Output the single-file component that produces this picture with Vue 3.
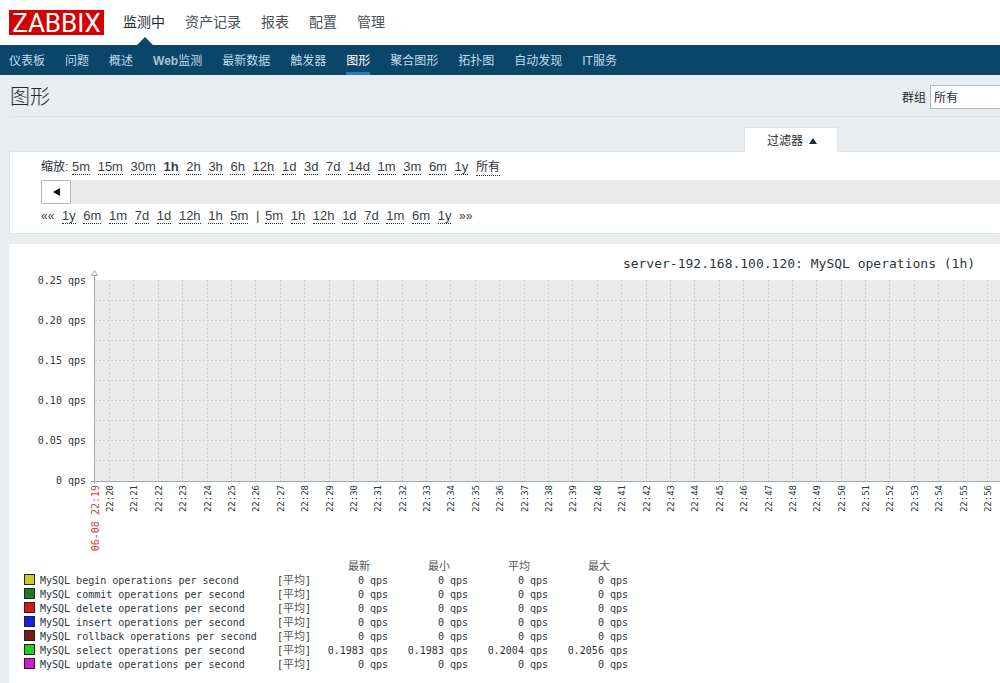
<script setup>
const mainMenu = ['监测中', '资产记录', '报表', '配置', '管理']
const subMenu = ['仪表板', '问题', '概述', 'Web监测', '最新数据', '触发器', '图形', '聚合图形', '拓扑图', '自动发现', 'IT服务']
const zooms = ['5m', '15m', '30m', '1h', '2h', '3h', '6h', '12h', '1d', '3d', '7d', '14d', '1m', '3m', '6m', '1y']
const back = ['1y', '6m', '1m', '7d', '1d', '12h', '1h', '5m']
const forward = ['5m', '1h', '12h', '1d', '7d', '1m', '6m', '1y']

const yLabels = ['0.25 qps', '0.20 qps', '0.15 qps', '0.10 qps', '0.05 qps', '0 qps']
const rows = [1, 2, 3, 4, 5, 6, 7, 8, 9].map((i) => 36 + i * 20)
const ticks = Array.from({ length: 37 }, (_, i) => ({
  x: Math.round(100 + (i * 878) / 36),
  label: '22:' + (20 + i)
}))

const columns = ['最新', '最小', '平均', '最大']
const zero = ['0 qps', '0 qps', '0 qps', '0 qps']
const items = [
  { name: 'begin', color: '#cccc22', values: zero },
  { name: 'commit', color: '#1f7a1f', values: zero },
  { name: 'delete', color: '#cc1c1c', values: zero },
  { name: 'insert', color: '#1c1cee', values: zero },
  { name: 'rollback', color: '#7a1a1a', values: zero },
  { name: 'select', color: '#22cc22', values: ['0.1983 qps', '0.1983 qps', '0.2004 qps', '0.2056 qps'] },
  { name: 'update', color: '#cc1ccc', values: zero }
]
</script>

<template>
  <div class="page">
    <header class="top">
      <a class="logo" href="#">ZABBIX</a>
      <nav class="main-nav">
        <a v-for="m in mainMenu" :key="m" href="#" :class="{ on: m === '监测中' }">{{ m }}</a>
      </nav>
    </header>
    <nav class="sub-nav">
      <a v-for="s in subMenu" :key="s" href="#" :class="{ on: s === '图形' }"><b v-if="s === 'Web监测'">Web</b>{{ s.replace('Web', '') }}</a>
    </nav>

    <main>
      <div class="title-bar">
        <h1>图形</h1>
        <form class="group">
          <label for="group">群组</label>
          <select id="group"><option>所有</option></select>
        </form>
      </div>

      <div class="tab-row">
        <button class="filter-tab" type="button">
          过滤器
          <svg width="8" height="6" viewBox="0 0 8 6"><path d="M4 0L8 6H0z" fill="#1f2c33" /></svg>
        </button>
      </div>

      <section class="filter">
        <div class="links">
          <span class="cjk">缩放:</span>
          <template v-for="z in zooms" :key="z">{{ ' ' }}<a href="#" :class="{ current: z === '1h' }">{{ z }}</a></template>
          {{ ' ' }}<a href="#" class="cjk">所有</a>
        </div>
        <div class="scroller">
          <button type="button" aria-label="◄">
            <svg width="7" height="8" viewBox="0 0 7 8"><path d="M0 4L7 0V8z" fill="#111" /></svg>
          </button>
        </div>
        <div class="links">
          <span class="arrows">««</span>
          <template v-for="b in back" :key="b">{{ ' ' }}<a href="#">{{ b }}</a></template>
          {{ ' ' }}<span class="bar">|</span>
          <template v-for="f in forward" :key="f">{{ ' ' }}<a href="#">{{ f }}</a></template>
          {{ ' ' }}<span class="arrows">»»</span>
        </div>
      </section>

      <section class="graph">
        <svg class="chart" width="100%" height="315">
          <text class="chart-title" x="790" y="24" text-anchor="middle">server-192.168.100.120: MySQL operations (1h)</text>
          <rect x="85" y="36" width="100%" height="201" fill="#ebebeb" />
          <g class="grid">
            <line v-for="y in rows" :key="y" x1="86" :y1="y + 0.5" x2="100%" :y2="y + 0.5" />
            <line v-for="t in ticks" :key="t.label" :x1="t.x + 0.5" y1="36" :x2="t.x + 0.5" y2="237" />
          </g>
          <path d="M85.500 32V240M82 237.500H2000" class="axis" />
          <path d="M82.500 31.500H88.500L85.500 26.500z" class="arrow" />
          <text v-for="(l, i) in yLabels" :key="l" x="77" :y="40 + i * 40" text-anchor="end" class="label">{{ l }}</text>
          <text
            v-for="t in ticks"
            :key="t.label"
            class="tick"
            text-anchor="end"
            :transform="`translate(${t.x + 4} 241) rotate(-90)`"
          >{{ t.label }}</text>
          <text class="label date" text-anchor="end" transform="translate(90 241) rotate(-90)">06-08 22:19</text>
        </svg>

        <table class="legend">
          <thead>
            <tr>
              <th class="swatch-col"></th>
              <th class="name-col"></th>
              <th class="fn-col"></th>
              <th v-for="(c, i) in columns" :key="c" :class="i ? 'val' : 'val first'">{{ c }}</th>
            </tr>
          </thead>
          <tbody>
            <tr v-for="it in items" :key="it.name">
              <td class="mark"><i class="swatch" :style="{ background: it.color }"></i></td>
              <td>MySQL {{ it.name }} operations per second</td>
              <td>[<span class="avg">平均</span>]</td>
              <td v-for="(v, i) in it.values" :key="i" class="num">{{ v }}</td>
            </tr>
          </tbody>
        </table>
      </section>
    </main>
  </div>
</template>

<style>
body {
  margin: 0;
  background: #e9edf0;
}
</style>

<style scoped>
.page {
  min-height: 100vh;
  overflow: hidden;
  background: #e9edf0;
  color: #1f2c33;
  font: 12px/16px "Liberation Sans", "Noto Sans CJK SC", sans-serif;
}
a {
  color: inherit;
  text-decoration: none;
}
button {
  font: inherit;
  color: inherit;
  padding: 0;
  display: flex;
  align-items: center;
  justify-content: center;
}
.top {
  display: flex;
  align-items: center;
  height: 45px;
  padding-left: 9px;
  background: #fff;
}
.logo {
  width: 95px;
  height: 25px;
  background: #d40000;
  color: #fff;
  font: 26px/26px Roboto, sans-serif;
  text-align: center;
}
.main-nav {
  display: flex;
  align-self: stretch;
  gap: 20px;
  margin-left: 19px;
  font-size: 14px;
  line-height: 45px;
  color: #4a5358;
}
.main-nav .on {
  position: relative;
  color: #1f2c33;
}
.main-nav .on::after {
  content: "";
  position: absolute;
  left: 50%;
  bottom: 0;
  margin-left: -7px;
  border: 8px solid transparent;
  border-top: 0;
  border-bottom-color: #0a466a;
}
.sub-nav {
  display: flex;
  gap: 20px;
  height: 30px;
  padding-left: 9px;
  background: #0a466a;
  color: #bfdcee;
  line-height: 32px;
}
.sub-nav a {
  box-sizing: border-box;
  height: 30px;
  white-space: nowrap;
}
.sub-nav b {
  color: #a9c0d0;
}
.sub-nav .on {
  color: #fff;
  border-bottom: 3px solid #1f80bd;
}
main {
  padding-left: 9px;
}
.title-bar {
  display: flex;
  align-items: center;
  justify-content: space-between;
  height: 41px;
  border-bottom: 1px solid #dfe4e7;
}
h1 {
  margin: 2px 0 0 1px;
  font-size: 20px;
  font-weight: 300;
  line-height: 24px;
}
.group {
  display: flex;
  align-items: center;
  gap: 4px;
  margin-top: 3px;
}
.group label {
  padding-top: 2px;
}
select {
  appearance: none;
  box-sizing: border-box;
  width: 70px;
  height: 24px;
  padding: 2px 3px 0;
  border: 1px solid #acb8c0;
  border-right: 0;
  border-radius: 0;
  background: #fff;
  color: inherit;
  font: inherit;
}
.tab-row {
  display: flex;
  justify-content: flex-end;
  padding: 10px 162px 0 0;
}
.filter-tab {
  position: relative;
  box-sizing: border-box;
  gap: 6px;
  width: 94px;
  height: 25px;
  margin-bottom: -1px;
  padding: 2px 0 0 2px;
  border: 1px solid #dfe4e7;
  border-bottom: 0;
  background: #fff;
}
.filter {
  padding: 7px 0 9px 31px;
  border: 1px solid #dfe4e7;
  border-right: 0;
  background: #fff;
}
.links {
  font-size: 13px;
  line-height: 16px;
  white-space: nowrap;
  color: #3a3f45;
}
.links a,
.links span {
  margin-right: 4px;
}
.links span.cjk {
  margin-right: 0;
}
.links span.bar {
  margin-right: 2px;
}
.links .cjk {
  font-size: 12px;
  color: #1f2c33;
}
.links .arrows {
  font-size: 12px;
}
.links a {
  display: inline-block;
  height: 15px;
  line-height: 15px;
  border-bottom: 1px dotted #1f2c33;
}
.links .current {
  font-weight: bold;
}
.scroller {
  height: 24px;
  margin: 4px 0;
  background: #e9ebed;
}
.scroller button {
  box-sizing: border-box;
  width: 30px;
  height: 24px;
  border: 1px solid #acb8c0;
  border-radius: 2px;
  background: #fff;
}
.graph {
  margin-top: 10px;
  padding-bottom: 20px;
  background: #fff;
  color: #2c363c;
  font: 10px/14px "DejaVu Sans Mono", "Noto Sans CJK SC", monospace;
}
.chart {
  display: block;
}
.chart-title {
  font-size: 13px;
  fill: #2c363c;
}
.label {
  font-size: 10px;
  fill: #2c363c;
}
.tick {
  font-size: 9px;
  fill: #2c363c;
}
.date {
  fill: #d63a3a;
}
.grid line {
  stroke: #d0d0d0;
  stroke-dasharray: 2 2;
}
.axis {
  fill: none;
  stroke: #9aabb0;
}
.arrow {
  fill: #fff;
  stroke: #9aabb0;
}
.legend {
  margin-left: 15px;
  table-layout: fixed;
  width: 604px;
  border-collapse: collapse;
}
.legend th,
.legend td {
  height: 14px;
  padding: 0;
  line-height: 14px;
  white-space: nowrap;
}
.legend th {
  height: 15px;
  font-size: 11px;
  font-weight: normal;
  color: #555;
}
.legend .swatch-col {
  width: 16px;
}
.legend .name-col {
  width: 237px;
}
.legend .fn-col {
  width: 34px;
}
.legend .val {
  width: 62px;
  padding-right: 18px;
  text-align: right;
}
.legend .first {
  width: 59px;
}
.legend .num {
  text-align: right;
}
.legend .mark {
  vertical-align: top;
}
.avg {
  font-size: 11px;
  line-height: 10px;
  color: #555;
}
.swatch {
  display: block;
  box-sizing: border-box;
  width: 11px;
  height: 11px;
  border: 1px solid #222;
}
</style>
